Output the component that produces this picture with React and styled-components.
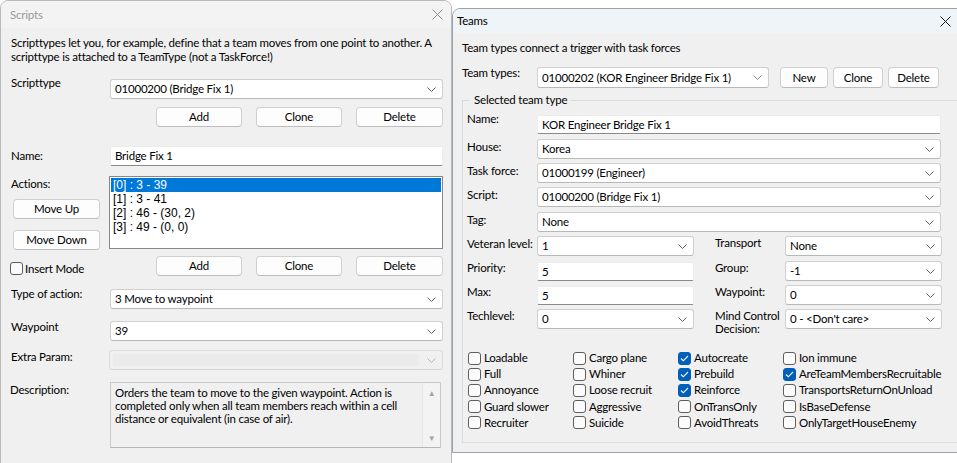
import React from 'react'
import styled, { createGlobalStyle } from 'styled-components'

const GlobalStyle = createGlobalStyle`
  html, body {
    margin: 0;
    padding: 0;
    background: #ffffff;
    overflow: hidden;
  }
  body {
    font-family: Lato, "Noto Sans", sans-serif;
    font-size: 11.5px;
    letter-spacing: -0.2px;
    color: #000;
  }
`;

const Desktop = styled.div`
  display: flex;
  align-items: flex-start;
  width: 957px;
  height: 463px;
  overflow: hidden;
`;

const Window = styled.div`
  flex-shrink: 0;
  box-sizing: border-box;
  width: ${p => p.$width}px;
  height: ${p => p.$height}px;
  margin-top: ${p => p.$top || 0}px;
  background: #f0f0f0;
  border: 1px solid ${p => (p.$active ? '#9aa3ad' : '#b9b9b9')};
  border-radius: 8px 8px 0 0;
  overflow: hidden;
  display: flex;
  flex-direction: column;
`;

const TitleBar = styled.div`
  height: ${p => p.$h}px;
  flex-shrink: 0;
  display: flex;
  align-items: center;
  justify-content: space-between;
  padding: 0 ${p => p.$padRight}px 0 ${p => p.$padLeft}px;
  background: ${p => (p.$active ? '#eff4f9' : '#f3f3f3')};
  color: ${p => (p.$active ? '#000' : '#9a9a9a')};
  line-height: 14px;
`;

const CloseIcon = ({ color }) => (
  <svg width="11" height="11" viewBox="0 0 11 11">
    <path d="M0.5 0.5 L10.5 10.5 M10.5 0.5 L0.5 10.5" stroke={color} strokeWidth="1" fill="none" />
  </svg>
);

const Chevron = ({ color = '#606060' }) => (
  <svg width="9" height="5" viewBox="0 0 9 5">
    <polyline points="0.5,0.5 4.5,4.5 8.5,0.5" stroke={color} strokeWidth="1" fill="none" />
  </svg>
);

const Body = styled.div`
  padding: ${p => p.$pad};
  display: flex;
  flex-direction: column;
  line-height: 14px;
`;

const Text = styled.div`
  line-height: 14px;
  white-space: nowrap;
  margin-top: ${p => p.$mt || 0}px;
`;

const Row = styled.div`
  display: grid;
  grid-template-columns: ${p => p.$cols};
  align-items: start;
  margin-top: ${p => p.$mt || 0}px;
`;

const Label = styled.div`
  line-height: ${p => p.$lh || 14}px;
  margin-top: ${p => p.$dy || 0}px;
  white-space: nowrap;
`;

const Combo = styled.div`
  box-sizing: border-box;
  height: ${p => p.$h || 20}px;
  width: ${p => (p.$w ? p.$w + 'px' : 'auto')};
  display: flex;
  align-items: center;
  justify-content: space-between;
  padding: 0 6px 0 ${p => p.$padLeft || 4}px;
  background: ${p => (p.$disabled ? '#f0f0f0' : '#ffffff')};
  border: 1px solid ${p => (p.$disabled ? '#dcdcdc' : '#cfcfcf')};
  border-bottom-color: ${p => (p.$disabled ? '#d4d4d4' : '#b8b8b8')};
  border-radius: 3px;
  white-space: nowrap;
  line-height: 14px;
`;

const ComboInner = styled.div`
  flex: 1;
  align-self: stretch;
  margin: 3px 8px 3px -1px;
  background: ${p => (p.$disabled ? '#ebebeb' : 'transparent')};
`;

const Edit = styled.div`
  box-sizing: border-box;
  height: ${p => p.$h || 20}px;
  margin-top: ${p => p.$mt || 0}px;
  display: flex;
  align-items: center;
  padding-left: ${p => p.$padLeft || 4}px;
  background: #ffffff;
  border: 1px solid #ececec;
  border-bottom: 1px solid #8a8a8a;
  border-radius: 2px;
  white-space: nowrap;
`;

const ButtonRow = styled.div`
  display: flex;
  justify-content: ${p => p.$justify || 'flex-end'};
  gap: ${p => p.$gap || 14}px;
  margin-top: ${p => p.$mt || 0}px;
  margin-left: ${p => p.$ml || 0}px;
`;

const Button = styled.div`
  box-sizing: border-box;
  width: ${p => p.$w}px;
  height: ${p => p.$h || 20}px;
  margin-left: ${p => p.$ml || 0}px;
  margin-top: ${p => p.$mt || 0}px;
  display: flex;
  align-items: center;
  justify-content: center;
  background: #fdfdfd;
  border: 1px solid #d0d0d0;
  border-bottom-color: #bdbdbd;
  border-radius: 4px;
  line-height: 14px;
`;

const List = styled.div`
  box-sizing: border-box;
  height: 73px;
  margin-left: -1px;
  background: #ffffff;
  border: 1px solid #828790;
  padding: 1px;
  font-family: "Liberation Sans", Lato, sans-serif;
  font-size: 12px;
  letter-spacing: 0;
`;

const ListItem = styled.div`
  height: 14px;
  line-height: 14px;
  padding-left: 2px;
  background: ${p => (p.$selected ? '#0078d7' : 'transparent')};
  color: ${p => (p.$selected ? '#ffffff' : '#000000')};
`;

const LeftStack = styled.div`
  display: flex;
  flex-direction: column;
`;

const CheckLine = styled.label`
  display: flex;
  align-items: center;
  gap: ${p => p.$gap || 3}px;
  height: ${p => p.$h || 16}px;
  margin-left: ${p => p.$ml || 0}px;
  margin-top: ${p => p.$mt || 0}px;
  white-space: nowrap;
  line-height: 14px;
`;

const Box = styled.span`
  box-sizing: border-box;
  width: 13px;
  height: 13px;
  flex-shrink: 0;
  border-radius: 3px;
  display: flex;
  align-items: center;
  justify-content: center;
  background: ${p => (p.$checked ? '#005fb8' : '#fbfbfb')};
  border: 1px solid ${p => (p.$checked ? '#005fb8' : '#5d5d5d')};
`;

const CheckBox = ({ checked, children, ...rest }) => (
  <CheckLine {...rest}>
    <Box $checked={checked}>
      {checked && (
        <svg width="9" height="7" viewBox="0 0 9 7">
          <polyline points="1,3.5 3.3,5.8 8,1" stroke="#ffffff" strokeWidth="1.1" fill="none" />
        </svg>
      )}
    </Box>
    <span>{children}</span>
  </CheckLine>
);

const DescBox = styled.div`
  box-sizing: border-box;
  height: 66px;
  width: 331px;
  display: flex;
  background: #f0f0f0;
  border: 1px solid #c9c9c9;
  border-bottom-color: #b5b5b5;
`;

const DescText = styled.div`
  flex: 1;
  padding: 3px 4px;
  line-height: 13px;
  white-space: nowrap;
`;

const ScrollBar = styled.div`
  width: 17px;
  display: flex;
  flex-direction: column;
  justify-content: space-between;
  align-items: center;
  padding: 6px 0 5px;
  background: #f3f3f3;
  border-left: 1px solid #e6e6e6;
  color: #a3a3a3;
  font-size: 8px;
  line-height: 8px;
`;

const GroupBox = styled.fieldset`
  margin: ${p => p.$mt}px 0 0 0;
  padding: 0 4px 0 4px;
  height: 350px;
  width: 520px;
  box-sizing: border-box;
  border: 1px solid #dcdcdc;
  border-radius: 0;
`;

const Legend = styled.legend`
  margin-left: 3px;
  padding: 0 3px 0 4px;
  line-height: 14px;
`;

const CheckGrid = styled.div`
  display: grid;
  grid-template-columns: repeat(4, 105px);
  grid-template-rows: repeat(5, 16.2px);
  grid-auto-flow: column;
  margin-top: ${p => p.$mt}px;
  margin-left: 1px;
`;

const LeftCol = '99px 333px';

function ScriptsWindow() {
  return (
    <Window $width={452} $height={480}>
      <TitleBar $h={27} $padLeft={9} $padRight={8}>
        <span>Scripts</span>
        <CloseIcon color="#8c8c8c" />
      </TitleBar>
      <Body $pad="8px 0 0 10px">
        <Text>
          Scripttypes let you, for example, define that a team moves from one point to another. A
          <br />
          scripttype is attached to a TeamType (not a TaskForce!)
        </Text>

        <Row $cols={LeftCol} $mt={15}>
          <Label $dy={-3}>Scripttype</Label>
          <Combo>
            01000200 (Bridge Fix 1)
            <Chevron />
          </Combo>
        </Row>
        <Row $cols={LeftCol} $mt={8}>
          <span />
          <ButtonRow>
            <Button $w={86}>Add</Button>
            <Button $w={86}>Clone</Button>
            <Button $w={87}>Delete</Button>
          </ButtonRow>
        </Row>

        <Row $cols={LeftCol} $mt={19}>
          <Label $dy={3}>Name:</Label>
          <Edit>Bridge Fix 1</Edit>
        </Row>

        <Row $cols={LeftCol} $mt={10}>
          <LeftStack>
            <Label $dy={1}>Actions:</Label>
            <Button $w={87} $ml={2} $mt={8}>Move Up</Button>
            <Button $w={87} $ml={2} $mt={11}>Move Down</Button>
            <CheckBox $ml={-1} $mt={10} $h={17} $gap={2}>Insert Mode</CheckBox>
          </LeftStack>
          <div>
            <List>
              <ListItem $selected>[0] : 3 - 39</ListItem>
              <ListItem>[1] : 3 - 41</ListItem>
              <ListItem>[2] : 46 - (30, 2)</ListItem>
              <ListItem>[3] : 49 - (0, 0)</ListItem>
            </List>
            <ButtonRow $mt={7}>
              <Button $w={86}>Add</Button>
              <Button $w={86}>Clone</Button>
              <Button $w={87}>Delete</Button>
            </ButtonRow>
          </div>
        </Row>

        <Row $cols={LeftCol} $mt={12}>
          <Label $dy={-2}>Type of action:</Label>
          <Combo>
            3 Move to waypoint
            <Chevron />
          </Combo>
        </Row>
        <Row $cols={LeftCol} $mt={12}>
          <Label $dy={-1}>Waypoint</Label>
          <Combo>
            39
            <Chevron />
          </Combo>
        </Row>
        <Row $cols={LeftCol} $mt={9}>
          <Label>Extra Param:</Label>
          <Combo $disabled style={{ marginLeft: -1 }}>
            <ComboInner $disabled />
            <Chevron color="#b5b5b5" />
          </Combo>
        </Row>
        <Row $cols={LeftCol} $mt={12}>
          <Label $dy={1} style={{ marginLeft: -1 }}>Description:</Label>
          <DescBox>
            <DescText>
              Orders the team to move to the given waypoint. Action is
              <br />
              completed only when all team members reach within a cell
              <br />
              distance or equivalent (in case of air).
            </DescText>
            <ScrollBar>
              <span>▲</span>
              <span>▼</span>
            </ScrollBar>
          </DescBox>
        </Row>
      </Body>
    </Window>
  );
}

const single = '70px 404px';
const double = '70px 157px 21px 70px 157px';

function TeamsWindow() {
  return (
    <Window $width={512} $height={445} $top={8} $active>
      <TitleBar $active $h={24} $padLeft={4} $padRight={12}>
        <span>Teams</span>
        <CloseIcon color="#1a1a1a" />
      </TitleBar>
      <Body $pad="8px 0 0 9px">
        <Text>Team types connect a trigger with task forces</Text>

        <Row $cols="75px 232px auto" $mt={12}>
          <Label $dy={-1}>Team types:</Label>
          <Combo $h={21} $w={232}>
            01000202 (KOR Engineer Bridge Fix 1)
            <Chevron color="#8a8a8a" />
          </Combo>
          <ButtonRow $justify="flex-start" $gap={5} $ml={11}>
            <Button $w={48} $h={21}>New</Button>
            <Button $w={50} $h={21}>Clone</Button>
            <Button $w={51} $h={21}>Delete</Button>
          </ButtonRow>
        </Row>

        <GroupBox $mt={5}>
          <Legend>Selected team type</Legend>

          <Row $cols={single} $mt={8}>
            <Label $dy={-3}>Name:</Label>
            <Edit $h={19}>KOR Engineer Bridge Fix 1</Edit>
          </Row>
          <Row $cols={single} $mt={5}>
            <Label $dy={1}>House:</Label>
            <Combo>Korea<Chevron /></Combo>
          </Row>
          <Row $cols={single} $mt={4}>
            <Label $dy={1}>Task force:</Label>
            <Combo>01000199 (Engineer)<Chevron /></Combo>
          </Row>
          <Row $cols={single} $mt={4}>
            <Label $dy={1}>Script:</Label>
            <Combo>01000200 (Bridge Fix 1)<Chevron /></Combo>
          </Row>
          <Row $cols={single} $mt={5}>
            <Label $dy={1}>Tag:</Label>
            <Combo>None<Chevron /></Combo>
          </Row>

          <Row $cols={double} $mt={4}>
            <Label $dy={1}>Veteran level:</Label>
            <Combo>1<Chevron /></Combo>
            <span />
            <Label>Transport</Label>
            <Combo>None<Chevron /></Combo>
          </Row>
          <Row $cols={double} $mt={5}>
            <Label>Priority:</Label>
            <Edit $h={19} $mt={1}>5</Edit>
            <span />
            <Label>Group:</Label>
            <Combo>-1<Chevron /></Combo>
          </Row>
          <Row $cols={double} $mt={4}>
            <Label>Max:</Label>
            <Edit $h={19} $mt={1}>5</Edit>
            <span />
            <Label>Waypoint:</Label>
            <Combo>0<Chevron /></Combo>
          </Row>
          <Row $cols={double} $mt={4}>
            <Label>Techlevel:</Label>
            <Combo>0<Chevron /></Combo>
            <span />
            <Label $lh={13}>
              Mind Control
              <br />
              Decision:
            </Label>
            <Combo>0 - &lt;Don't care&gt;<Chevron /></Combo>
          </Row>

          <CheckGrid $mt={15}>
            <CheckBox>Loadable</CheckBox>
            <CheckBox>Full</CheckBox>
            <CheckBox>Annoyance</CheckBox>
            <CheckBox>Guard slower</CheckBox>
            <CheckBox>Recruiter</CheckBox>
            <CheckBox>Cargo plane</CheckBox>
            <CheckBox>Whiner</CheckBox>
            <CheckBox>Loose recruit</CheckBox>
            <CheckBox>Aggressive</CheckBox>
            <CheckBox>Suicide</CheckBox>
            <CheckBox checked>Autocreate</CheckBox>
            <CheckBox checked>Prebuild</CheckBox>
            <CheckBox checked>Reinforce</CheckBox>
            <CheckBox>OnTransOnly</CheckBox>
            <CheckBox>AvoidThreats</CheckBox>
            <CheckBox>Ion immune</CheckBox>
            <CheckBox checked>AreTeamMembersRecruitable</CheckBox>
            <CheckBox>TransportsReturnOnUnload</CheckBox>
            <CheckBox>IsBaseDefense</CheckBox>
            <CheckBox>OnlyTargetHouseEnemy</CheckBox>
          </CheckGrid>
        </GroupBox>
      </Body>
    </Window>
  );
}

export default function App() {
  return (
    <>
      <GlobalStyle />
      <Desktop>
        <ScriptsWindow />
        <TeamsWindow />
      </Desktop>
    </>
  );
}
